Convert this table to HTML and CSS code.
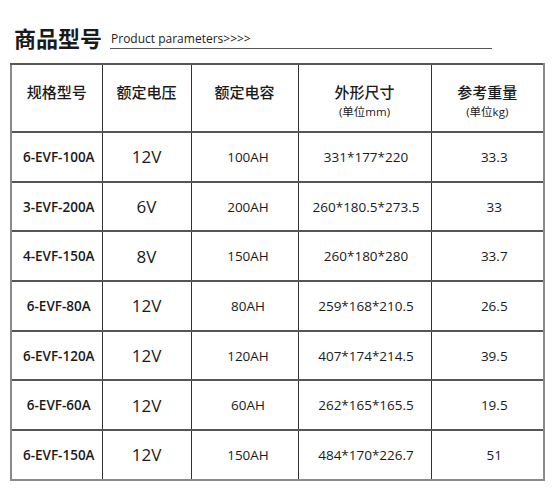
FILE: index.html
```html
<!DOCTYPE html>
<html lang="zh">
<head>
<meta charset="utf-8">
<title>商品型号</title>
<link rel="stylesheet" href="styles.css">
</head>
<body>
<div class="page">
  <div class="heading">
    <h1 class="title">商品型号</h1>
    <span class="subtitle">Product parameters&gt;&gt;&gt;&gt;</span>
  </div>
  <table class="spec">
    <colgroup>
      <col class="c1"><col class="c2"><col class="c3"><col class="c4"><col class="c5">
    </colgroup>
    <thead>
      <tr>
        <th>规格型号</th>
        <th>额定电压</th>
        <th>额定电容</th>
        <th>外形尺寸<span class="unit">(单位mm)</span></th>
        <th>参考重量<span class="unit">(单位kg)</span></th>
      </tr>
    </thead>
    <tbody>
      <tr><td class="model">6-EVF-100A</td><td class="volt">12V</td><td class="cap">100AH</td><td class="dim">331*177*220</td><td class="wt">33.3</td></tr>
      <tr><td class="model">3-EVF-200A</td><td class="volt">6V</td><td class="cap">200AH</td><td class="dim">260*180.5*273.5</td><td class="wt">33</td></tr>
      <tr><td class="model">4-EVF-150A</td><td class="volt">8V</td><td class="cap">150AH</td><td class="dim">260*180*280</td><td class="wt">33.7</td></tr>
      <tr><td class="model">6-EVF-80A</td><td class="volt">12V</td><td class="cap">80AH</td><td class="dim">259*168*210.5</td><td class="wt">26.5</td></tr>
      <tr><td class="model">6-EVF-120A</td><td class="volt">12V</td><td class="cap">120AH</td><td class="dim">407*174*214.5</td><td class="wt">39.5</td></tr>
      <tr><td class="model">6-EVF-60A</td><td class="volt">12V</td><td class="cap">60AH</td><td class="dim">262*165*165.5</td><td class="wt">19.5</td></tr>
      <tr><td class="model">6-EVF-150A</td><td class="volt">12V</td><td class="cap">150AH</td><td class="dim">484*170*226.7</td><td class="wt">51</td></tr>
    </tbody>
  </table>
</div>
</body>
</html>
```

FILE: styles.css
```css
html, body {
  margin: 0;
  padding: 0;
  background: #ffffff;
}

body {
  font-family: "Open Sans", "Noto Sans CJK SC", sans-serif;
  color: #1a1a1a;
}

.page {
  width: 553px;
  height: 500px;
  overflow: hidden;
}

.heading {
  display: flex;
  align-items: flex-end;
  padding: 24px 0 0 14px;
  height: 26px;
}

.title {
  margin: 0;
  font-family: "Noto Sans CJK SC", sans-serif;
  font-size: 22px;
  line-height: 26px;
  font-weight: 700;
  color: #1a1a1a;
}

.subtitle {
  margin: 0 0 1px 8px;
  width: 381px;
  font-size: 12px;
  line-height: 16px;
  color: #222;
  border-bottom: 1px solid #555;
  padding-left: 1px;
  padding-bottom: 1px;
}

.spec {
  margin: 13px 0 0 10px;
  width: 533px;
  border-collapse: collapse;
  table-layout: fixed;
  border: 2px solid #8a8a8a;
}

.c1 { width: 91px; }
.c2 { width: 89px; }
.c3 { width: 107px; }
.c4 { width: 133px; }
.c5 { width: 113px; }

.spec th,
.spec td {
  border: 1px solid #333;
  border-top-width: 2px;
  border-top-color: #555;
  padding: 0;
  text-align: center;
}

.spec th {
  height: 49px;
  vertical-align: top;
  padding-top: 17px;
  font-family: "Noto Sans CJK SC", sans-serif;
  font-size: 15px;
  line-height: 20px;
  font-weight: 500;
  color: #1a1a1a;
}

.spec th:first-child,
.spec td:first-child {
  border-left: 2px solid #8a8a8a;
}

.spec th:last-child,
.spec td:last-child {
  border-right: 2px solid #8a8a8a;
}

.unit {
  display: block;
  font-family: "Open Sans", "Noto Sans CJK SC", sans-serif;
  font-size: 11.5px;
  line-height: 20px;
  font-weight: 400;
}

.spec td {
  height: 47.7px;
  vertical-align: middle;
  font-size: 13.5px;
  color: #1a1a1a;
}

.spec tbody tr:last-child td {
  border-bottom: 2px solid #8a8a8a;
}

.model {
  font-size: 12.5px;
  font-weight: 600;
  padding-left: 4px !important;
}

.volt {
  font-size: 17px !important;
}

.cap {
  padding-left: 7px !important;
  font-size: 13.5px !important;
}

.dim {
  padding-left: 3px !important;
}

.wt {
  padding-left: 14px !important;
}
```
